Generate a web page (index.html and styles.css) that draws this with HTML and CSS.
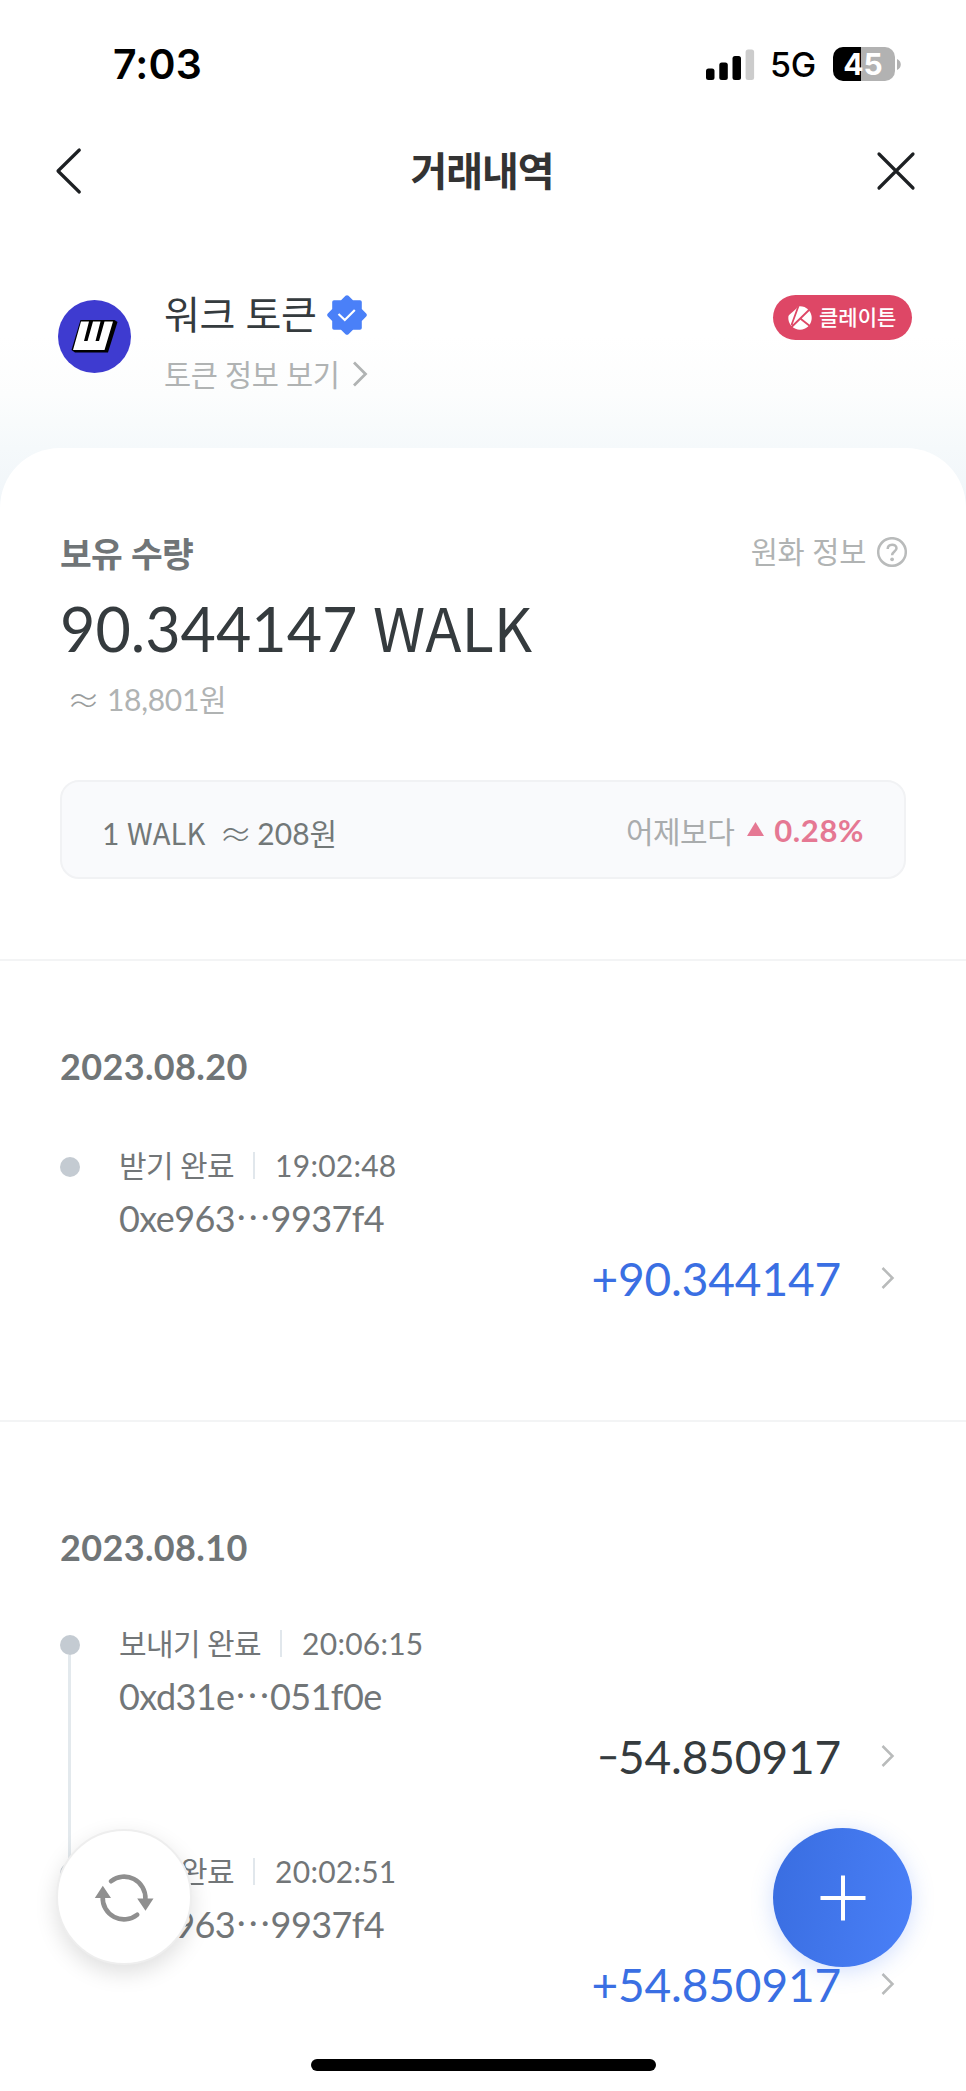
FILE: index.html
```html
<!DOCTYPE html>
<html lang="ko">
<head>
<meta charset="utf-8">
<title>거래내역</title>
<link rel="stylesheet" href="styles.css">
</head>
<body>
<div class="screen">
  <header class="status-bar">
    <span class="clock">7:03</span>
    <div class="status-right">
      <svg class="signal" width="49" height="31" viewBox="0 0 49 31"><rect x="0" y="19.500" width="8.500" height="11.500" rx="2.500"/><rect x="13.300" y="13.500" width="8.500" height="17.500" rx="2.500"/><rect x="26.500" y="7" width="8.500" height="24" rx="2.500"/><rect x="39.600" y="0.500" width="8.500" height="30.500" rx="2.500" fill="#ccc"/></svg>
      <span class="network">5G</span>
      <div class="battery"><span class="battery-text">45</span></div>
      <svg class="battery-nub" width="4" height="11" viewBox="0 0 4 11"><path d="M0 0c5 2 5 9 0 11z" fill="#b2b2b2"/></svg>
    </div>
  </header>

  <nav class="nav">
    <svg class="back" width="28" height="48" viewBox="0 0 28 48"><path d="M24.300 3 3 24l21.300 21"/></svg>
    <h1 class="nav-title">거래내역</h1>
    <svg class="close" width="40" height="40" viewBox="0 0 40 40"><path d="M3 3l34 34M37 3 3 37"/></svg>
  </nav>

  <section class="token">
    <svg class="token-logo" width="73" height="73" viewBox="0 0 73 73">
      <circle cx="36.500" cy="36.500" r="36.500" fill="#3e3bd0"/>
      <path d="M22.500 20h34l3 2-9.500 30.500H17l-3.500-2.500z" fill="#000"/>
      <path d="M23 21.500h8L26 41h3.500L35 21.500h7.500L37.500 41H41l5.500-19.500h8.500L46.500 50H15z" fill="#fff"/>
    </svg>
    <div class="token-text">
      <div class="token-name">
        <span>워크 토큰</span>
        <svg width="40" height="40" viewBox="0 0 40 40"><path d="M18.500.8q1.500-1.300 3 0L26 5.200h7q1.800 0 1.800 1.800v7l4.400 4.500q1.300 1.500 0 3L34.800 26v7q0 1.800-1.800 1.800h-7l-4.500 4.400q-1.500 1.300-3 0L14 34.800H7q-1.800 0-1.800-1.800v-7L.8 21.500q-1.300-1.500 0-3L5.200 14V7q0-1.800 1.800-1.800h7z" fill="#4a80f8"/><path d="M11.500 19l6.300 6L27.800 15" fill="none" stroke="#fff" stroke-width="2.200"/></svg>
      </div>
      <div class="token-link">
        <span>토큰 정보 보기</span>
        <svg width="16" height="28" viewBox="0 0 16 28"><path d="M2 2.500 13.500 14 2 25.500"/></svg>
      </div>
    </div>
    <div class="chain">
      <svg width="24" height="24" viewBox="0 0 24 24"><circle cx="12" cy="12" r="11.700" fill="#fff"/><path d="M-1-1h11.500L8.500 2.500-1 11z" fill="#de4766"/><path d="M3.500 19 10.500 0M3 21.500 21.500 3.500M12.300 12.500l9.500 7.500" stroke="#de4766" stroke-width="1.800" fill="none"/></svg>
      <span>클레이튼</span>
    </div>
  </section>

  <main class="card">
    <section class="balance">
      <div class="balance-head">
        <h2 class="balance-title">보유 수량</h2>
        <div class="krw-info">
          <span>원화 정보</span>
          <svg width="30" height="30" viewBox="0 0 30 30"><circle cx="15" cy="15" r="13.800"/><path d="M10.700 12c0-5.800 8.800-5.600 8.800-.7 0 3.200-4.400 3.400-4.400 7"/><circle class="mark" cx="15.100" cy="22.300" r="1.900"/></svg>
        </div>
      </div>
      <div class="amount">90.344147 <span class="symbol">WALK</span></div>
      <div class="fiat"><span class="approx">≈</span><span>18,801원</span></div>
      <div class="rate">
        <div class="rate-left"><span>1 <span class="symbol">WALK</span></span><span class="approx">≈</span><span>208원</span></div>
        <div class="rate-right"><span class="rate-label">어제보다</span><svg width="17" height="14" viewBox="0 0 17 14"><path d="M8.500 0 17 14H0z" fill="#e57893"/></svg><span class="rate-pct">0.28%</span></div>
      </div>
    </section>

    <section class="day">
      <h3 class="date">2023.08.20</h3>
      <article class="tx">
        <div class="rail"><i class="dot"></i></div>
        <div class="tx-body">
          <div class="tx-head"><span>받기 완료</span><i class="sep"></i><span class="time">19:02:48</span></div>
          <div class="addr">0xe963⋯9937f4</div>
          <div class="tx-amount plus"><span>+90.344147</span><svg width="14" height="24" viewBox="0 0 14 24"><path d="M1.500 2 11.500 12 1.500 22"/></svg></div>
        </div>
      </article>
    </section>

    <section class="day day-second">
      <h3 class="date">2023.08.10</h3>
      <article class="tx">
        <div class="rail"><i class="dot"></i><i class="line"></i></div>
        <div class="tx-body">
          <div class="tx-head"><span>보내기 완료</span><i class="sep"></i><span class="time">20:06:15</span></div>
          <div class="addr">0xd31e⋯051f0e</div>
          <div class="tx-amount"><span><span class="minus">−</span>54.850917</span><svg width="14" height="24" viewBox="0 0 14 24"><path d="M1.500 2 11.500 12 1.500 22"/></svg></div>
        </div>
      </article>
      <article class="tx">
        <div class="rail"><i class="dot"></i></div>
        <div class="tx-body">
          <div class="tx-head"><span>받기 완료</span><i class="sep"></i><span class="time">20:02:51</span></div>
          <div class="addr">0xe963⋯9937f4</div>
          <div class="tx-amount plus"><span>+54.850917</span><svg width="14" height="24" viewBox="0 0 14 24"><path d="M1.500 2 11.500 12 1.500 22"/></svg></div>
        </div>
      </article>
    </section>
  </main>

  <button class="fab fab-refresh" aria-label="새로고침">
    <svg width="60" height="50" viewBox="0 0 60 50"><g fill="none" stroke="#8f8f8f" stroke-width="4.600" stroke-linecap="round"><path d="M17 8.200A21.300 21.300 0 0 1 51.400 26"/><path d="M43.200 41.800A21.300 21.300 0 0 1 8.700 24"/></g><path d="M43.200 25.500h16.300l-8 12.200zM.8 25 8.800 12.700 17 25z" fill="#8f8f8f"/></svg>
  </button>
  <button class="fab fab-add" aria-label="추가">
    <svg width="46" height="46" viewBox="0 0 46 46"><path d="M23 .5v45M.5 23h45" stroke="#fff" stroke-width="4"/></svg>
  </button>
  <div class="home-bar"></div>
</div>
</body>
</html>
```
FILE: styles.css
```css
* { box-sizing: border-box; }

body {
  margin: 0;
  background: #fff;
  font-family: Lato, "Noto Sans CJK KR", sans-serif;
  color: #727678;
}

h1, h2, h3 { margin: 0; }

.screen {
  position: relative;
  width: 966px;
  height: 2091px;
  overflow: hidden;
  background: linear-gradient(#fff 335px, #fcfdfd 395px, #f5f9fb 448px, #f0f5f9 510px, #fff 510px);
}

/* status bar */
.status-bar {
  display: flex;
  justify-content: space-between;
  align-items: center;
  height: 128px;
  padding: 0 65px 0 113px;
  font-family: Inter, sans-serif;
  color: #000;
}
.clock { font-size: 41px; font-weight: 600; line-height: 50px; letter-spacing: 0.1px; }
.status-right { display: flex; align-items: center; }
.network { margin-left: 15px; font-size: 34px; font-weight: 500; line-height: 42px; letter-spacing: -0.3px; width: 48px; padding-top: 2px; }
.battery {
  width: 62px;
  height: 34px;
  margin-left: 15px;
  border-radius: 10px;
  background: linear-gradient(90deg, #000 28px, #b2b2b2 28px);
  text-align: center;
}
.battery-text { display: block; padding-right: 2px; font-size: 30px; font-weight: 700; line-height: 34px; color: #fff; }
.battery-nub { margin-left: 2px; }

/* navigation */
.nav {
  display: flex;
  justify-content: space-between;
  align-items: center;
  height: 86px;
  padding: 0 50px 0 55px;
}
.nav svg { fill: none; stroke: #1d2023; stroke-width: 3.2; stroke-linecap: round; stroke-linejoin: round; }
.nav-title {
  font-family: "Noto Sans CJK KR", sans-serif;
  font-size: 40px;
  font-weight: 700;
  line-height: 60px;
  letter-spacing: -1px;
  color: #333;
  padding: 0 0 5px 5px;
}

/* token summary */
.token { display: flex; height: 234px; padding: 72px 54px 0 58px; font-family: "Noto Sans CJK KR", sans-serif; }
.token-logo { margin-top: 14px; flex: none; }
.token-text { margin-left: 33px; flex: 1; }
.token-name { display: flex; align-items: center; height: 57px; gap: 11px; font-size: 39px; line-height: 54px; color: #353b3e; }
.token-name span { padding-bottom: 5px; letter-spacing: -0.4px; }
.token-link { display: flex; align-items: center; height: 62px; gap: 13px; font-size: 29.5px; line-height: 44px; color: #b0b3b3; }
.token-link span { padding-bottom: 2px; letter-spacing: -0.5px; }
.token-link svg { fill: none; stroke: #b0b3b3; stroke-width: 2.8; }
.chain {
  display: flex;
  align-items: center;
  width: 139px;
  height: 45px;
  margin-top: 9px;
  padding-left: 15px;
  gap: 7px;
  border-radius: 23px;
  background: #de4766;
  color: #fff;
  font-size: 21px;
  font-weight: 500;
  line-height: 30px;
  white-space: nowrap;
}
.chain span { padding-bottom: 3px; }

/* white card */
.card { height: 1643px; border-radius: 60px 60px 0 0; background: #fff; }
.balance { height: 513px; padding: 80px 60px 0; border-bottom: 2px solid #f3f4f5; }
.balance-head { display: flex; justify-content: space-between; height: 50px; }
.balance-title { font-family: "Noto Sans CJK KR", sans-serif; font-size: 34.500px; font-weight: 700; line-height: 48px; letter-spacing: -0.7px; color: #707577; }
.krw-info { display: flex; align-items: center; gap: 11px; height: 48px; margin-right: -1px; font: 400 29.500px/44px "Noto Sans CJK KR", sans-serif; color: #b0b3b3; }
.krw-info span { padding-bottom: 5px; letter-spacing: -0.3px; }
.krw-info svg { fill: none; stroke: #b9bbbb; stroke-width: 2.500; }
.krw-info .mark { fill: #b9bbbb; stroke: none; }
.amount { height: 80px; margin-top: 11px; font-size: 61px; line-height: 80px; color: #353b3e; white-space: nowrap; }
.symbol { font-family: "Noto Sans CJK KR", sans-serif; font-size: 0.975em; line-height: 1; }
.fiat { display: flex; height: 44px; margin-top: 8px; padding-left: 7px; font-size: 30px; line-height: 44px; letter-spacing: -0.3px; color: #b0b3b3; }
.approx { font-family: "Noto Sans CJK KR", sans-serif; font-size: 33px; font-weight: 300; }
.fiat .approx { width: 40px; color: #9a9d9d; }
.rate {
  display: flex;
  justify-content: space-between;
  height: 99px;
  margin-top: 59px;
  padding: 0 40px;
  border: 2px solid #f1f2f4;
  border-radius: 19px;
  background: #f9fafc;
  font-size: 30px;
  line-height: 95px;
}
.rate-left { display: flex; padding-top: 4px; color: #727878; }
.rate-left .approx { width: 38px; margin-left: 14px; }
.rate-right { display: flex; align-items: center; }
.rate-label { font-family: "Noto Sans CJK KR", sans-serif; padding-top: 1px; letter-spacing: -0.5px; color: #a9acad; }
.rate-right svg { margin: 0 10px 2px 13px; }
.rate-pct { padding-top: 1px; font-size: 31px; font-weight: 700; letter-spacing: 0.6px; color: #e57893; }

/* transaction history */
.day { height: 461px; padding: 83px 59px 0; border-bottom: 2px solid #f3f4f5; }
.day-second { height: auto; padding-top: 103px; border-bottom: 0; }
.date { height: 44px; padding-left: 1px; font-size: 36px; font-weight: 700; line-height: 44px; color: #707577; letter-spacing: 0.35px; }
.tx { display: flex; height: 228px; margin-top: 55px; }
.day-second .tx { margin-top: 52px; }
.day-second .tx + .tx { margin-top: 0; }
.rail { display: flex; flex-direction: column; align-items: center; width: 21px; padding-top: 14px; }
.dot { flex: none; width: 20px; height: 20px; border-radius: 50%; background: #c4cbd2; }
.line { flex: none; width: 3px; height: 208px; background: #e3e9ed; }
.tx-body { flex: 1; margin-left: 39px; }
.tx-head { display: flex; align-items: center; height: 44px; font-size: 30px; line-height: 44px; }
.tx-head > span:first-child { letter-spacing: -0.6px; }
.time { letter-spacing: 0.25px; }
.sep { width: 2px; height: 27px; margin: 0 20px 0 19px; background: #e1e7ec; }
.addr { height: 50px; margin-top: 6px; font-size: 36px; line-height: 50px; letter-spacing: -0.58px; white-space: nowrap; }
.tx-amount { display: flex; justify-content: flex-end; align-items: center; height: 60px; margin-top: 5px; padding-right: 12px; font-size: 46px; line-height: 60px; letter-spacing: -0.15px; color: #353b3e; }
.tx-amount span { padding-top: 1px; }
.tx-amount svg { margin-left: 40px; fill: none; stroke: #b9bbbb; stroke-width: 2.500; }
.minus { font-size: 35px; line-height: 1; vertical-align: 4px; -webkit-text-stroke: 0.7px currentColor; }
.plus { color: #3a6fe3; }

/* floating controls */
.fab { position: absolute; display: flex; align-items: center; justify-content: center; padding: 0; border: 0; border-radius: 50%; }
.fab-refresh { left: 56px; top: 1829px; width: 136px; height: 136px; border: 2px solid #eee; background: #fff; box-shadow: 0 8px 22px rgba(0, 0, 0, 0.13); }
.fab-refresh svg { margin-top: 2px; }
.fab-add { left: 773px; top: 1828px; width: 139px; height: 139px; background: linear-gradient(100deg, #396de0, #4a80f8); box-shadow: 0 4px 22px rgba(74, 128, 248, 0.25); }
.home-bar { position: absolute; left: 311px; top: 2059px; width: 345px; height: 12px; border-radius: 6px; background: #000; }
```
